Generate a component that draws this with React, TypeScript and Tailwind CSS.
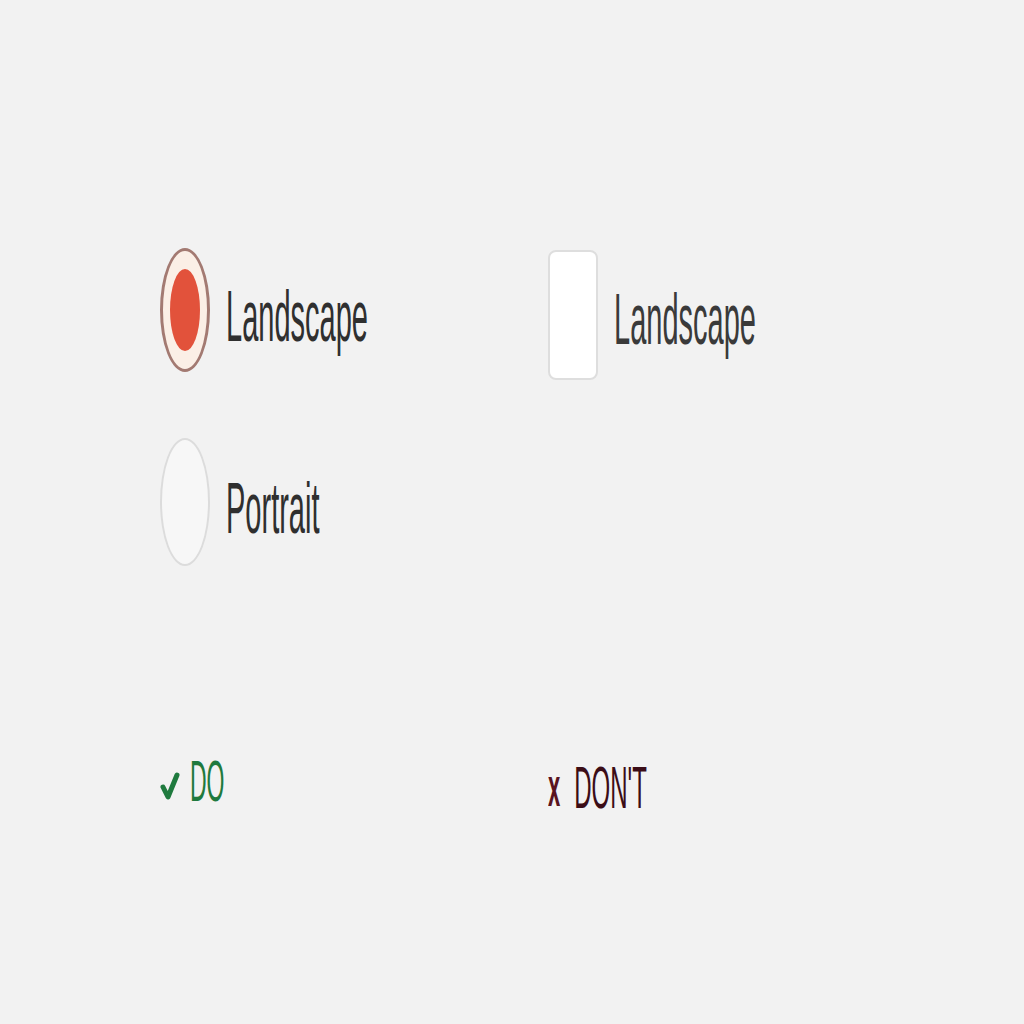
import React from 'react'

function Tall({ children, className = '' }: { children: React.ReactNode; className?: string }) {
  return (
    <span className={`inline-block font-['Liberation_Sans',Arial,sans-serif] leading-none scale-y-[2.5] ${className}`}>
      {children}
    </span>
  )
}

function RadioRow({ label, checked }: { label: string; checked?: boolean }) {
  return (
    <div className="flex items-center gap-[16px]">
      {checked ? (
        <div className="w-[50px] h-[124px] rounded-[50%] border-[3px] border-[#a37a72] bg-[#fbefe6] flex items-center justify-center">
          <div className="w-[30px] h-[82px] rounded-[50%] bg-[#e2523b]" />
        </div>
      ) : (
        <div className="w-[50px] h-[128px] rounded-[50%] border-2 border-[#dcdcdc] bg-[#f7f7f7]" />
      )}
      <Tall className="text-[29px] text-[#2f2f2f] mt-[14px]">{label}</Tall>
    </div>
  )
}

export default function App() {
  return (
    <div className="min-h-screen bg-[#f2f2f2] pl-[160px] pt-[248px]">
      <div className="flex">
        <div className="w-[388px] flex flex-col gap-[66px]">
          <RadioRow label="Landscape" checked />
          <RadioRow label="Portrait" />
        </div>
        <div className="flex items-start">
          <div className="flex items-center gap-[16px] mt-[2px]">
            <div className="w-[50px] h-[130px] rounded-lg border-2 border-[#dedede] bg-white" />
            <Tall className="text-[29px] text-[#3a3a3a] mt-[10px]">Landscape</Tall>
          </div>
        </div>
      </div>
      <div className="flex mt-[194px]">
        <div className="w-[388px] flex items-center h-[44px] gap-[10px]">
          <svg width="20" height="32" viewBox="0 0 20 32" className="mt-[6px]">
            <path d="M3 18 L8 28 L17 6" fill="none" stroke="#1f7a3e" strokeWidth="5" strokeLinecap="round" strokeLinejoin="round" />
          </svg>
          <Tall className="text-[23px] font-medium text-[#1f7a3e]">DO</Tall>
        </div>
        <div className="flex items-center h-[44px] gap-[14px] mt-[6px]">
          <Tall className="text-[22px] font-bold text-[#5a1420]">x</Tall>
          <Tall className="text-[24px] text-[#3b0d17]">DON'T</Tall>
        </div>
      </div>
    </div>
  )
}
